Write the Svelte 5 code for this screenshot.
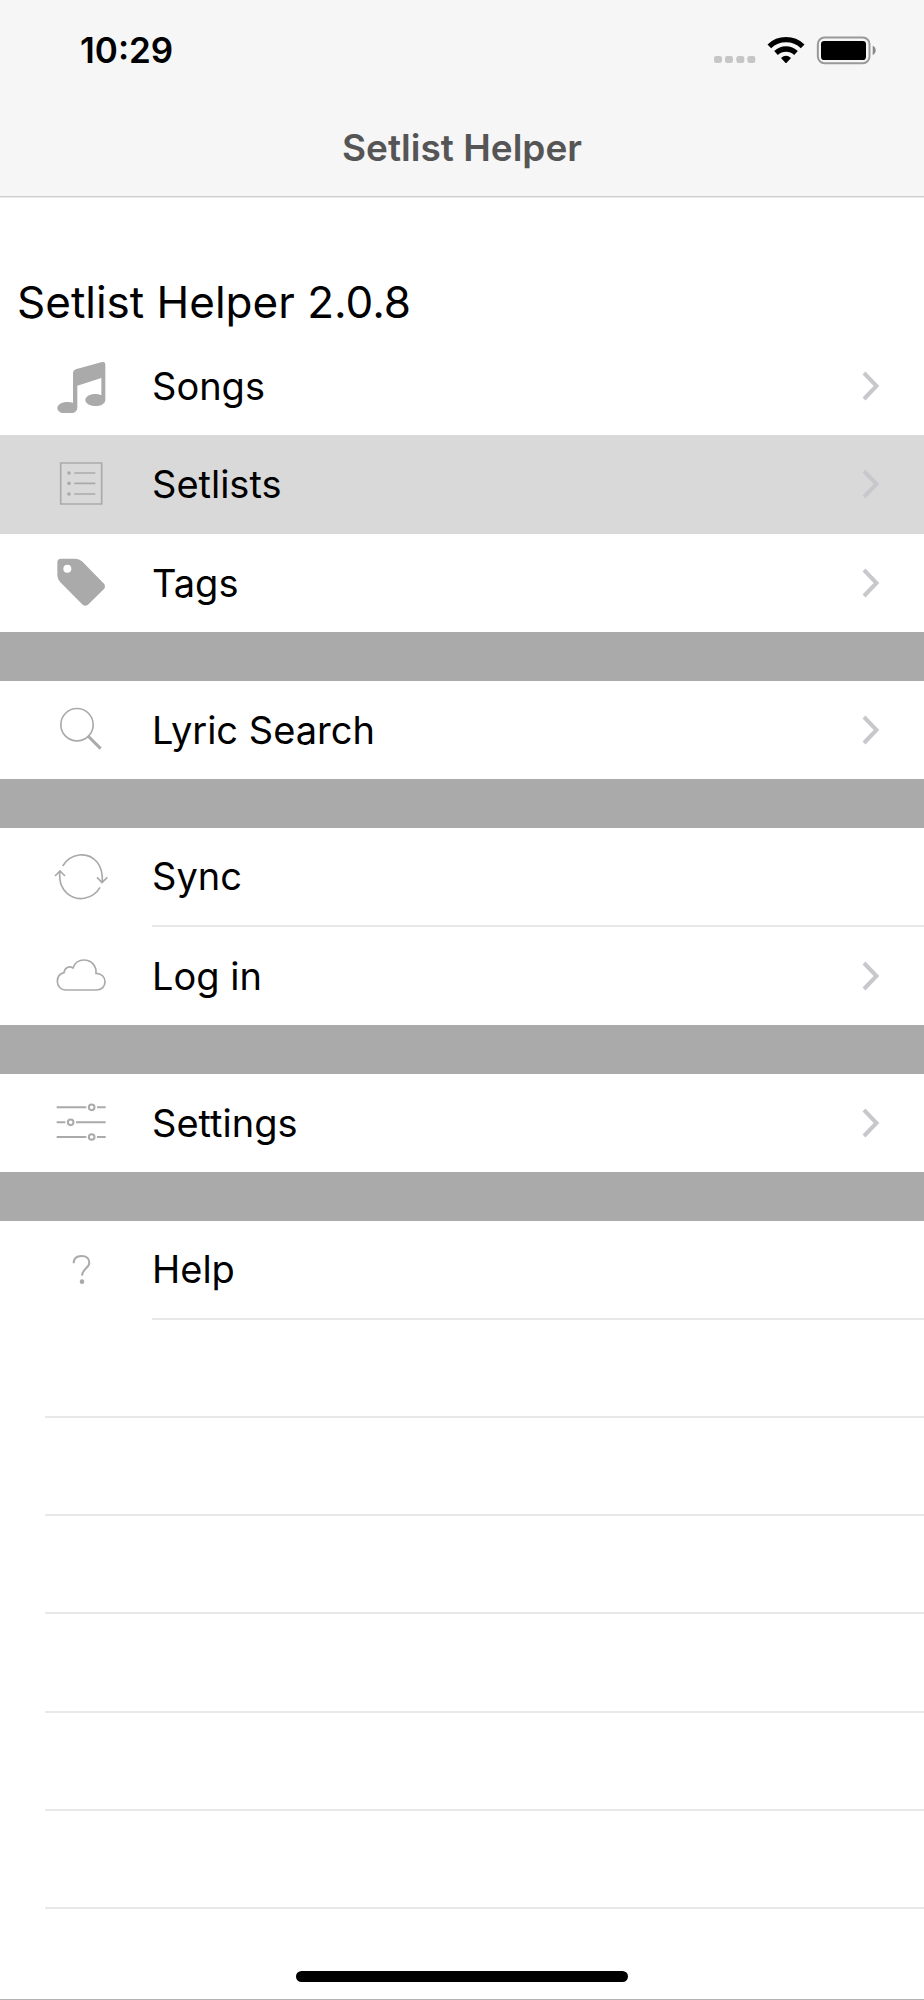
<script>
  const entries = [
    { label: 'Songs', icon: 'songs', view: '162 326 162 162', chevron: true },
    { label: 'Setlists', icon: 'setlists', view: '162 81 162 162', chevron: true, selected: true },
    { label: 'Tags', icon: 'tags', view: '162 376 162 162', chevron: true },
    { gap: true },
    { label: 'Lyric Search', icon: 'search', view: '162 99 162 162', chevron: true },
    { gap: true },
    { label: 'Sync', icon: 'sync', view: '162 89 162 162', divider: true },
    { label: 'Log in', icon: 'login', view: '162 385 162 162', chevron: true },
    { gap: true },
    { label: 'Settings', icon: 'settings', view: '162 107 162 162', chevron: true },
    { gap: true },
    { label: 'Help', icon: 'help', view: '162 99 162 162', divider: true }
  ];
  const emptyRows = [1, 2, 3, 4, 5, 6];
</script>

<div class="page">
  <header>
    <div class="status">
      <time>10:29</time>
      <div class="indicators">
        <svg width="43" height="32" viewBox="339 102 129 96" fill="#c6c6c6" aria-hidden="true">
          <rect x="342" y="168" width="24" height="21" rx="7" />
          <rect x="375" y="168" width="24" height="21" rx="7" />
          <rect x="409" y="168" width="24" height="21" rx="7" />
          <rect x="442" y="168" width="24" height="21" rx="7" />
        </svg>
        <svg width="38" height="32" viewBox="501 102 114 96" aria-hidden="true">
          <g fill="none" stroke="#000" stroke-width="16">
            <path d="M508 139 Q529 119 558 119 T608 139" />
            <path d="M528 159 Q541 147 558 147 T588 159" />
          </g>
          <path d="M543 174 Q558 160 573 174 L560 188 Q558 190 556 188 Z" />
        </svg>
        <svg width="61" height="32" viewBox="648 102 183 96" aria-hidden="true">
          <rect x="653.5" y="112.5" width="155" height="77" rx="20" fill="none" stroke="#999" stroke-width="6" />
          <rect x="663" y="123" width="135" height="57" rx="10" />
          <path d="M818 137 Q827 141 827 151 T818 165 Z" fill="#888" />
        </svg>
      </div>
    </div>
    <div class="title">Setlist Helper</div>
  </header>

  <h1>Setlist Helper 2.0.8</h1>

  <nav>
    {#each entries as entry}
      {#if entry.gap}
        <div class="gap"></div>
      {:else}
        <a class="row" class:selected={entry.selected} href="#{entry.icon}">
          <svg class="icon" width="54" height="54" viewBox={entry.view} aria-hidden="true">
            {#if entry.icon === 'songs'}
              <path class="solid" d="M219 368 Q219 360 227 357 L306 335 Q316 333 316 343 V448 C316 460 302 467 286 467 C269 467 256 459 256 449 C256 439 269 431 286 431 Q296 431 304 435 V383 L232 406 V472 C232 484 218 491 202 491 C185 491 172 483 172 473 C172 463 185 455 202 455 Q212 455 219 457 Z" />
            {:else if entry.icon === 'setlists'}
              <path class="line" d="M182 99 H305 V222 H182 Z M223 129 H286 M223 160 H286 M223 192 H286" />
              <g class="solid">
                <circle cx="207" cy="129" r="5.5" />
                <circle cx="207" cy="160" r="5.5" />
                <circle cx="207" cy="192" r="5.5" />
              </g>
            {:else if entry.icon === 'tags'}
              <path class="solid" fill-rule="evenodd" d="M183 384 H226 Q238 384 246 392 L312 459 Q318 467 312 475 L264 522 Q256 528 248 522 L181 455 Q172 446 172 434 V395 Q172 384 183 384 Z M202 402 A12 12 0 1 0 202 426 A12 12 0 1 0 202 402 Z" />
            {:else if entry.icon === 'search'}
              <circle class="line" cx="231" cy="164" r="48.5" />
              <path class="line thick" d="M264 198 L302 236" />
            {:else if entry.icon === 'sync'}
              <path class="line" d="M188 137 C211 99 262 91 291 125 C304 140 308 158 307 185 M291 171 L306 187 L322 171 M300 201 C281 234 234 247 202 220 C185 205 178 189 179 152 M165 167 L180 152 L195 167" />
            {:else if entry.icon === 'login'}
              <path class="line" d="M197 508 H290 C305 508 315 497 315 483 C315 469 304 458 288 458 C290 436 274 418 252 418 C237 418 224 427 219 442 C207 434 194 441 192 456 C180 459 172 469 172 482 C172 497 182 508 197 508 Z" />
            {:else if entry.icon === 'settings'}
              <path class="line bold" d="M170 141 H259 M291 141 H317 M170 186 H196 M228 186 H317 M170 230 H259 M291 230 H317" />
              <g class="line bold">
                <circle cx="275" cy="141" r="8.5" />
                <circle cx="212" cy="186" r="8.5" />
                <circle cx="275" cy="230" r="8.5" />
              </g>
            {:else}
              <path class="line bold" d="M221 160 C221 146 230 138 245 138 C259 138 268 146 268 158 C268 174 247 176 246 197" />
              <circle class="solid" cx="246" cy="215" r="7" />
            {/if}
          </svg>
          <span class="content" class:divider={entry.divider}>
            <span class="label">{entry.label}</span>
            {#if entry.chevron}
              <svg width="19" height="30" viewBox="0 0 19 30" fill="none" stroke="#c7c7cc" stroke-width="4" aria-hidden="true">
                <path d="M3 2 L15.5 15 L3 28" />
              </svg>
            {/if}
          </span>
        </a>
      {/if}
    {/each}
    {#each emptyRows as row (row)}
      <div class="empty"></div>
    {/each}
  </nav>

  <footer><div class="home"></div></footer>
</div>

<style>
  :global(body) {
    margin: 0;
    background: #fff;
  }
  .page {
    display: flex;
    flex-direction: column;
    min-height: 100vh;
    box-sizing: border-box;
    border-bottom: 1px solid #b4b4b4;
    font-family: Inter, "Liberation Sans", sans-serif;
    color: #000;
  }
  header {
    background: #f6f6f6;
    border-bottom: 1px solid #cfcfcf;
    box-shadow: 0 1px #e9e9e9;
  }
  .status {
    display: flex;
    align-items: center;
    justify-content: space-between;
    height: 100px;
    padding: 0 47px 0 80px;
  }
  time {
    font-size: 35px;
    line-height: 44px;
    font-weight: 600;
  }
  .indicators {
    display: flex;
    gap: 11px;
  }
  .title {
    line-height: 96px;
    text-align: center;
    font-size: 37px;
    font-weight: 600;
    color: #555;
  }
  h1 {
    margin: 0;
    padding: 78px 17px 8px;
    font-size: 44px;
    line-height: 54px;
    font-weight: 400;
  }
  nav {
    flex: 1;
    display: flex;
    flex-direction: column;
  }
  .row,
  .empty {
    flex: 2 0 98px;
    box-sizing: border-box;
  }
  .row {
    display: flex;
    align-items: center;
    padding-left: 54px;
    gap: 44px;
    color: inherit;
    text-decoration: none;
  }
  .selected {
    background: #d9d9d9;
  }
  .gap {
    flex: 1 0 49px;
    background: #aaa;
  }
  .icon {
    flex: none;
  }
  .content {
    flex: 1;
    align-self: stretch;
    display: flex;
    align-items: center;
    justify-content: space-between;
    padding-right: 44px;
  }
  .divider,
  .empty {
    border-bottom: 2px solid #e8e8e8;
  }
  .empty {
    margin-left: 45px;
  }
  .label {
    font-size: 38px;
    line-height: 48px;
  }
  .solid {
    fill: #aaa;
  }
  .line {
    fill: none;
    stroke: #aaa;
    stroke-width: 5;
  }
  .bold {
    stroke-width: 6;
  }
  .thick {
    stroke-width: 9;
  }
  footer {
    display: flex;
    align-items: flex-end;
    justify-content: center;
    height: 73px;
    padding-bottom: 17px;
  }
  .home {
    width: 36%;
    height: 11px;
    border-radius: 6px;
    background: #000;
  }
</style>
